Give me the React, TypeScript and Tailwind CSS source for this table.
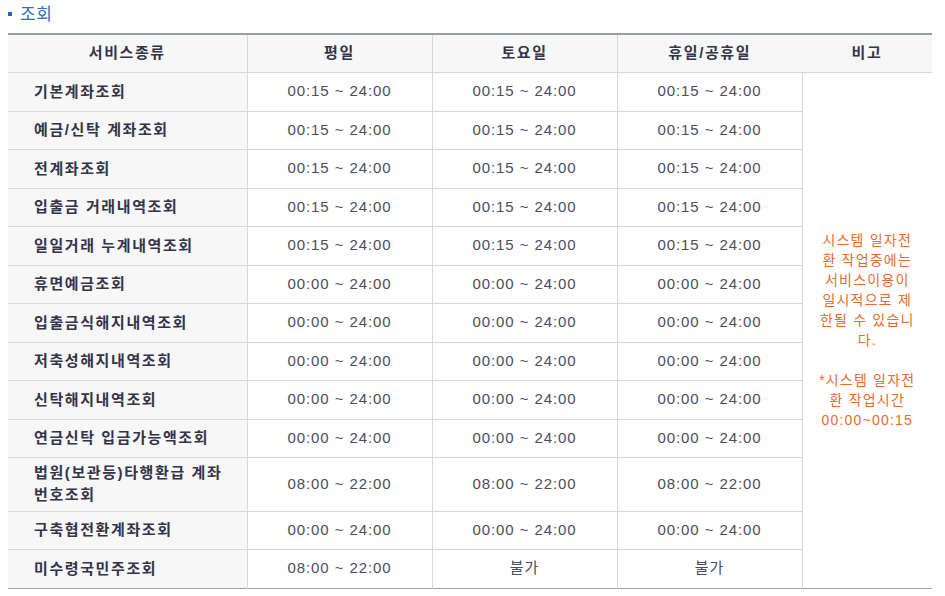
const rows: { name: React.ReactNode; weekday: string; sat: string; holiday: string; tall?: boolean }[] = [
  { name: '기본계좌조회', weekday: '00:15 ~ 24:00', sat: '00:15 ~ 24:00', holiday: '00:15 ~ 24:00' },
  { name: '예금/신탁 계좌조회', weekday: '00:15 ~ 24:00', sat: '00:15 ~ 24:00', holiday: '00:15 ~ 24:00' },
  { name: '전계좌조회', weekday: '00:15 ~ 24:00', sat: '00:15 ~ 24:00', holiday: '00:15 ~ 24:00' },
  { name: '입출금 거래내역조회', weekday: '00:15 ~ 24:00', sat: '00:15 ~ 24:00', holiday: '00:15 ~ 24:00' },
  { name: '일일거래 누계내역조회', weekday: '00:15 ~ 24:00', sat: '00:15 ~ 24:00', holiday: '00:15 ~ 24:00' },
  { name: '휴면예금조회', weekday: '00:00 ~ 24:00', sat: '00:00 ~ 24:00', holiday: '00:00 ~ 24:00' },
  { name: '입출금식해지내역조회', weekday: '00:00 ~ 24:00', sat: '00:00 ~ 24:00', holiday: '00:00 ~ 24:00' },
  { name: '저축성해지내역조회', weekday: '00:00 ~ 24:00', sat: '00:00 ~ 24:00', holiday: '00:00 ~ 24:00' },
  { name: '신탁해지내역조회', weekday: '00:00 ~ 24:00', sat: '00:00 ~ 24:00', holiday: '00:00 ~ 24:00' },
  { name: '연금신탁 입금가능액조회', weekday: '00:00 ~ 24:00', sat: '00:00 ~ 24:00', holiday: '00:00 ~ 24:00' },
  {
    name: (
      <>
        법원(보관등)타행환급 계좌
        <br />
        번호조회
      </>
    ),
    weekday: '08:00 ~ 22:00',
    sat: '08:00 ~ 22:00',
    holiday: '08:00 ~ 22:00',
    tall: true,
  },
  { name: '구축협전환계좌조회', weekday: '00:00 ~ 24:00', sat: '00:00 ~ 24:00', holiday: '00:00 ~ 24:00' },
  { name: '미수령국민주조회', weekday: '08:00 ~ 22:00', sat: '불가', holiday: '불가' },
];

const font = "font-['Liberation_Sans','Noto_Sans_CJK_KR',sans-serif]";

export default function App() {
  return (
    <div className={`${font} bg-white w-[945px] h-[596px] overflow-hidden pl-2`}>
      {/* Title */}
      <div className="flex items-center h-[33px] pb-[4px]">
        <span className="w-[4px] h-[4px] bg-[#2363b6] mr-[8px] mt-[-2px]" />
        <h2 className="text-[17px] leading-none text-[#2f6fc0] tracking-[0.5px]">조회</h2>
      </div>

      <table className="w-[924px] border-collapse table-fixed">
        <colgroup>
          <col className="w-[239px]" />
          <col className="w-[185px]" />
          <col className="w-[185px]" />
          <col className="w-[185px]" />
          <col className="w-[130px]" />
        </colgroup>
        <thead>
          <tr className="h-[38px] bg-[#f7f7f7] border-t-2 border-t-[#979ea9] border-b border-b-[#d3d8de] text-[15px] font-bold text-[#33334a] tracking-[1.6px]">
            <th className="border-r border-[#d3d8de] font-bold">서비스종류</th>
            <th className="border-r border-[#d3d8de] font-bold">평일</th>
            <th className="border-r border-[#d3d8de] font-bold">토요일</th>
            <th className="font-bold">휴일/공휴일</th>
            <th className="font-bold">비고</th>
          </tr>
        </thead>
        <tbody>
          {rows.map((r, i) => (
            <tr
              key={i}
              className={`${r.tall ? 'h-[54px]' : i % 2 === 0 ? 'h-[39px]' : 'h-[38px]'} border-b ${
                i === rows.length - 1 ? 'border-b-[#9aa1ab]' : 'border-b-[#d3d8de]'
              }`}
            >
              <td className="bg-[#f7f7f7] border-r border-[#d3d8de] pl-[26px] pr-[8px] text-[15px] leading-[22px] font-bold text-[#33334a] tracking-[1.6px]">
                {r.name}
              </td>
              <td className="border-r border-[#d3d8de] text-center text-[15px] text-[#4c4c5c] tracking-[0.9px]">
                {r.weekday}
              </td>
              <td className="border-r border-[#d3d8de] text-center text-[15px] text-[#4c4c5c] tracking-[0.9px]">
                {r.sat}
              </td>
              <td className="border-r border-[#d3d8de] text-center text-[15px] text-[#4c4c5c] tracking-[0.9px]">
                {r.holiday}
              </td>
              {i === 0 && (
                <td rowSpan={rows.length} className="align-middle text-center text-[14px] leading-[20px] text-[#ea6a2d] tracking-[1.2px]">
                  시스템 일자전
                  <br />
                  환 작업중에는
                  <br />
                  서비스이용이
                  <br />
                  일시적으로 제
                  <br />
                  한될 수 있습니
                  <br />
                  다.
                  <br />
                  <br />
                  *시스템 일자전
                  <br />
                  환 작업시간
                  <br />
                  00:00~00:15
                </td>
              )}
            </tr>
          ))}
        </tbody>
      </table>
    </div>
  );
}
